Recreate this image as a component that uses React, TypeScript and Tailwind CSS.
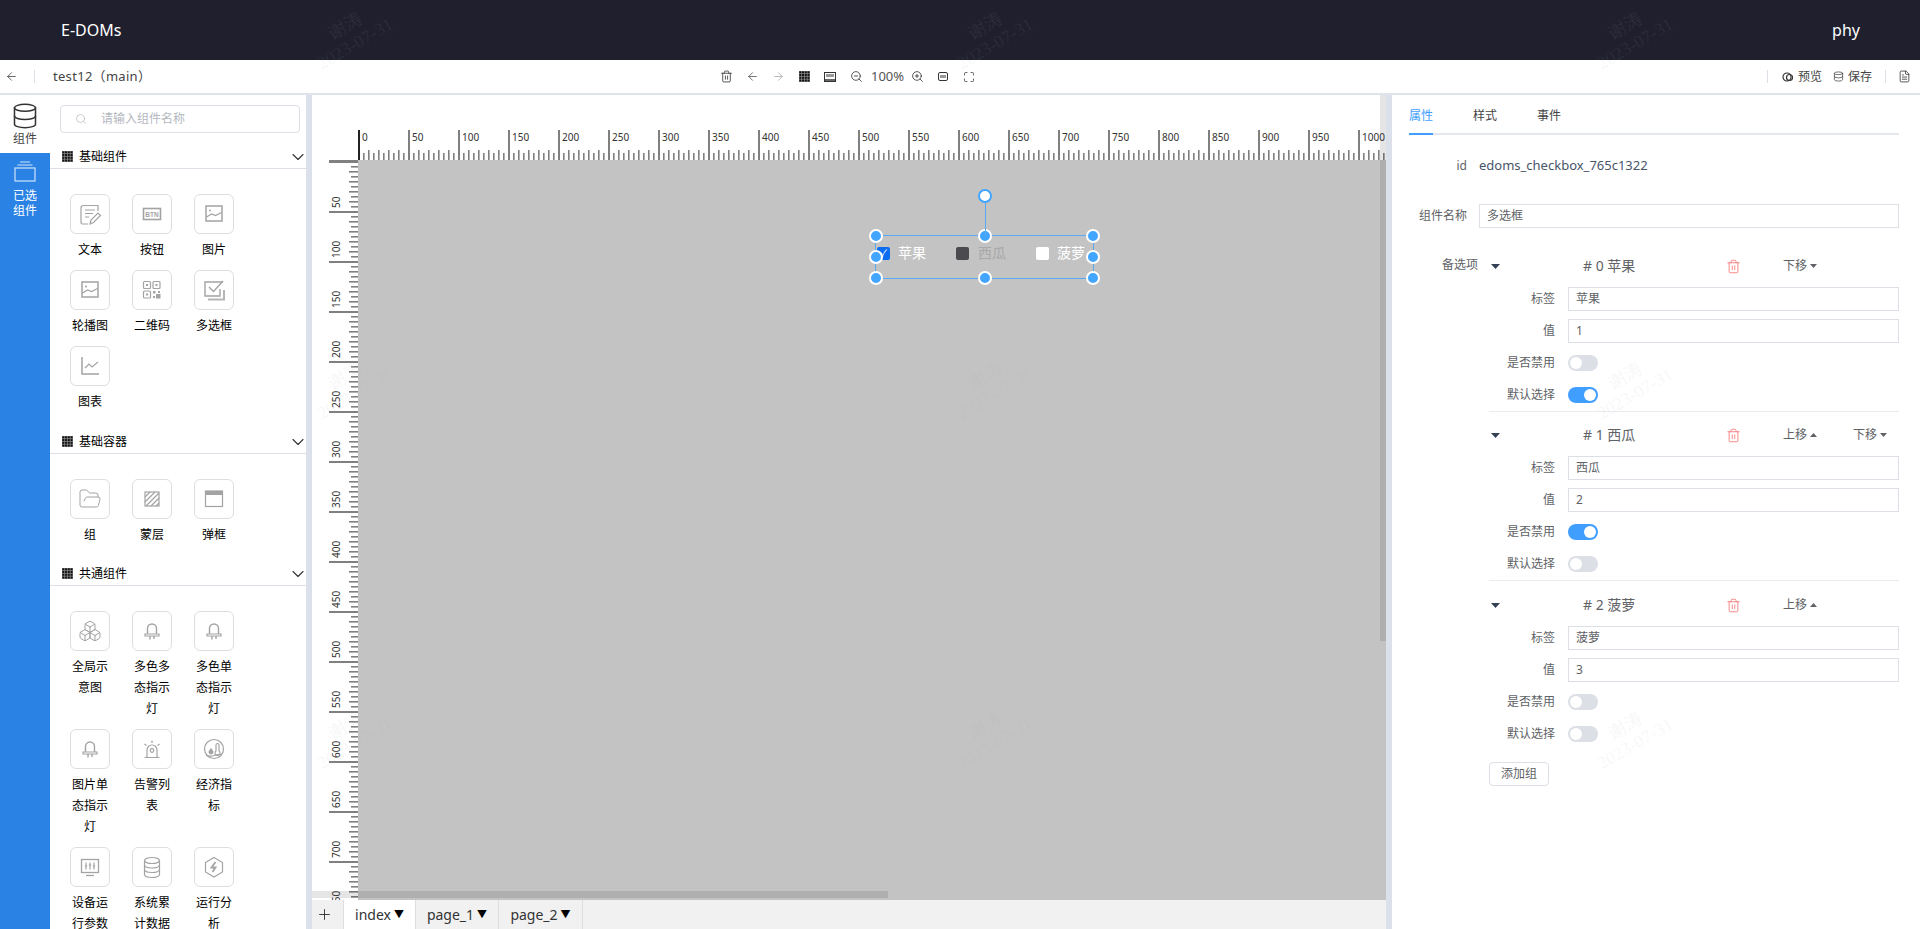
import {
  ArrowLeft,
  ArrowRight,
  Boxes,
  ChevronDown,
  Database,
  FileText,
  FolderOpen,
  Maximize,
  Plus,
  Search,
  Trash2,
  ZoomIn,
  ZoomOut,
} from 'lucide-react';
import type { ReactNode } from 'react';

const FONT = "font-['Noto_Sans','Noto_Sans_CJK_SC',sans-serif]";

function GridIcon() {
  const cells = [0, 1, 2, 3];
  return (
    <svg width="11" height="11" viewBox="0 0 11 11" className="shrink-0">
      <rect width="11" height="11" fill="#8a8a8a" />
      {cells.map((y) =>
        cells.map((x) => (
          <rect key={`${x}-${y}`} x={x * 2.75 + 0.3} y={y * 2.75 + 0.3} width="2" height="2" fill="#111" />
        )),
      )}
    </svg>
  );
}

function Svg({ children }: { children: ReactNode }) {
  return (
    <svg width="24" height="24" viewBox="0 0 24 24" fill="none" stroke="#a3a3a3" strokeWidth="1.2">
      {children}
    </svg>
  );
}

const NoteIcon = () => (
  <Svg>
    <path d="M20 9V3.5H5.5Q3 3.5 3 6v14.5q0 1.5 1.5 1.5H10" />
    <path d="M7 8h10M7 11.5h8M7 15h4" />
    <path d="M12 22l1-4 7-7 2.5 2.5-7 7z" />
  </Svg>
);
const BtnIcon = () => (
  <Svg>
    <rect x="3.5" y="6.5" width="17" height="11" strokeWidth="1.6" />
    <text x="12" y="14.5" textAnchor="middle" fontSize="6.5" fontWeight="700" fill="#a3a3a3" stroke="none" fontFamily="Liberation Sans">
      BTN
    </text>
  </Svg>
);
const PictureIcon = () => (
  <Svg>
    <rect x="4" y="4" width="16" height="15" strokeWidth="1.5" />
    <circle cx="8" cy="8.5" r="1" fill="#a3a3a3" stroke="none" />
    <path d="M4.5 15l5-3 4 1.5 6-3" />
  </Svg>
);
const QrIcon = () => (
  <Svg>
    <rect x="3.5" y="3.5" width="7" height="7" rx="1" />
    <rect x="13" y="3.5" width="7" height="7" rx="1" />
    <rect x="3.5" y="13" width="7" height="7" rx="1" />
    <g fill="#a3a3a3" stroke="none">
      <rect x="6" y="6" width="2" height="2" />
      <rect x="15.5" y="6" width="2" height="2" />
      <rect x="6" y="15.5" width="2" height="2" />
      <rect x="13" y="13" width="2.5" height="2.5" />
      <rect x="18" y="13" width="2" height="2" />
      <rect x="16" y="16" width="4.5" height="4.5" />
      <rect x="13" y="18" width="2" height="2" />
    </g>
  </Svg>
);
const CheckIcon = () => (
  <Svg>
    <path d="M21 4H3v14h15v-7" strokeWidth="1.4" />
    <path d="M7 9l4.5 4.5L21 3" strokeWidth="1.4" />
    <path d="M6 21.5h16V12" strokeWidth="2" stroke="#b5b5b5" />
  </Svg>
);
const ChartIcon = () => (
  <Svg>
    <path d="M4 3v17h17" strokeWidth="1.5" />
    <path d="M7 14l4-4 3 3 6-5" />
  </Svg>
);
const HatchIcon = () => (
  <Svg>
    <rect x="5" y="5" width="14" height="14" strokeWidth="1.2" />
    <path d="M5 10l5-5M5 15L15 5M6 19L19 6M11 19l8-8M16 19l3-3" />
  </Svg>
);
const WindowIcon = () => (
  <Svg>
    <rect x="3.5" y="4" width="17" height="15.5" strokeWidth="1.2" />
    <rect x="3.5" y="4" width="17" height="4" fill="#a3a3a3" stroke="none" />
  </Svg>
);
const LedIcon = () => (
  <Svg>
    <path d="M7.5 15V9.5a4.5 4.5 0 0 1 9 0V15" strokeWidth="1.4" />
    <path d="M5 15h14v2H5z" strokeWidth="1.2" />
    <path d="M10 17v3.5M14 17v3" strokeWidth="1.4" />
  </Svg>
);
const SirenIcon = () => (
  <Svg>
    <path d="M7 20v-7a5 5 0 0 1 10 0v7" />
    <circle cx="12" cy="13.5" r="1.8" />
    <path d="M4.5 20.5h15M12 3.5v2.5M4.5 7l2 1.5M19.5 7l-2 1.5" />
  </Svg>
);
const EconomyIcon = () => (
  <Svg>
    <circle cx="12" cy="12" r="9.5" />
    <path d="M9 11c-1.5 2-2.5 3-2.5 4a2.5 2.5 0 0 0 5 0c0-1-1-2-2.5-4z" fill="#a3a3a3" stroke="none" />
    <path d="M14 14V8a1.5 1.5 0 0 1 3 0v6a2.5 2.5 0 1 1-3 0z" />
    <path d="M4 18q4 2 8 .5t8-.5" />
  </Svg>
);
const MonitorIcon = () => (
  <Svg>
    <rect x="3.5" y="4.5" width="17" height="13" strokeWidth="1.3" />
    <path d="M8 20.5h8" strokeWidth="1.3" />
    <path d="M8 7.5v7M12 7.5v7M16 7.5v7" />
    <path d="M6.8 11h2.4M10.8 10h2.4M14.8 11h2.4" />
  </Svg>
);
const StackIcon = () => (
  <Svg>
    <ellipse cx="12" cy="5.5" rx="7.5" ry="3" />
    <path d="M4.5 5.5v14c0 1.7 3.4 3 7.5 3s7.5-1.3 7.5-3v-14" />
    <path d="M4.5 10c0 1.7 3.4 3 7.5 3s7.5-1.3 7.5-3M4.5 14.5c0 1.7 3.4 3 7.5 3s7.5-1.3 7.5-3" />
  </Svg>
);
const HexIcon = () => (
  <Svg>
    <path d="M12 2.5l8.5 5v9.5L12 22l-8.5-5V7.5z" />
    <path d="M13.5 7L9.5 12.5h4L10.5 17" strokeWidth="1.8" />
  </Svg>
);

type Item = { label: string; icon: ReactNode };

const basicItems: Item[] = [
  { label: '文本', icon: <NoteIcon /> },
  { label: '按钮', icon: <BtnIcon /> },
  { label: '图片', icon: <PictureIcon /> },
  { label: '轮播图', icon: <PictureIcon /> },
  { label: '二维码', icon: <QrIcon /> },
  { label: '多选框', icon: <CheckIcon /> },
  { label: '图表', icon: <ChartIcon /> },
];
const containerItems: Item[] = [
  { label: '组', icon: <FolderOpen size={24} strokeWidth={1} color="#a3a3a3" /> },
  { label: '蒙层', icon: <HatchIcon /> },
  { label: '弹框', icon: <WindowIcon /> },
];
const commonItems: Item[] = [
  { label: '全局示意图', icon: <Boxes size={24} strokeWidth={1} color="#a3a3a3" /> },
  { label: '多色多态指示灯', icon: <LedIcon /> },
  { label: '多色单态指示灯', icon: <LedIcon /> },
  { label: '图片单态指示灯', icon: <LedIcon /> },
  { label: '告警列表', icon: <SirenIcon /> },
  { label: '经济指标', icon: <EconomyIcon /> },
  { label: '设备运行参数', icon: <MonitorIcon /> },
  { label: '系统累计数据', icon: <StackIcon /> },
  { label: '运行分析', icon: <HexIcon /> },
];

function Section({ title, items, bottom }: { title: string; items: Item[]; bottom: string }) {
  return (
    <section>
      <div className="flex h-[23px] items-center border-b border-[#dcdfe6] pb-[1px] pl-3 text-xs text-black">
        <GridIcon />
        <span className="ml-[6px] flex-1">{title}</span>
        <ChevronDown size={20} strokeWidth={1.3} color="#333" className="-mr-[2px]" />
      </div>
      <div className={`grid grid-cols-[40px_40px_40px] gap-x-[22px] pl-5 pt-[25px] ${bottom}`}>
        {items.map((item) => (
          <div key={item.label}>
            <div className="flex h-10 w-10 items-center justify-center rounded-md border border-[#dedede]">
              {item.icon}
            </div>
            <p className="mb-[10px] mt-[5px] text-center text-xs leading-[21px] text-black">{item.label}</p>
          </div>
        ))}
      </div>
    </section>
  );
}

function Toggle({ on }: { on?: boolean }) {
  return (
    <div className={`flex h-4 w-[30px] items-center rounded-full px-[2px] ${on ? 'justify-end bg-[#409eff]' : 'bg-[#dcdfe6]'}`}>
      <div className="h-3 w-3 rounded-full bg-white" />
    </div>
  );
}

function Caret({ up }: { up?: boolean }) {
  return (
    <svg width="7" height="4" viewBox="0 0 7 4" className="ml-[3px]">
      <path d={up ? 'M0 4L3.5 0L7 4z' : 'M0 0L7 0L3.5 4z'} fill="#606266" />
    </svg>
  );
}

function Field({ label, children }: { label: string; children: ReactNode }) {
  return (
    <div className="flex h-6 items-center">
      <span className="w-[66px] text-right text-xs text-[#606266]">{label}</span>
      <div className="ml-[13px] flex-1">{children}</div>
    </div>
  );
}

function TextBox({ value }: { value: string }) {
  return (
    <div className="flex h-6 items-center border border-[#dcdfe6] px-[7px] text-xs text-[#606266]">{value}</div>
  );
}

function OptionGroup({
  index,
  name,
  value,
  up,
  down,
  disabled,
  checked,
  wrapper,
}: {
  index: number;
  name: string;
  value: string;
  up?: boolean;
  down?: boolean;
  disabled?: boolean;
  checked?: boolean;
  wrapper: string;
}) {
  return (
    <div className={wrapper}>
      <div className="mb-[9px] flex h-6 items-center text-xs text-[#606266]">
        <div className="w-[94px] pl-[2px]">
          <svg width="9" height="5" viewBox="0 0 9 5" className="block">
            <path d="M0 0h9L4.5 5z" fill="#334155" />
          </svg>
        </div>
        <span className="w-[143px] text-sm">
          # {index} {name}
        </span>
        <div className="w-[57px]">
          <Trash2 size={15} strokeWidth={1.3} color="#f56c6c" />
        </div>
        <div className="flex w-[70px] items-center">
          {up ? (
            <>
              上移
              <Caret up />
            </>
          ) : (
            <>
              下移
              <Caret />
            </>
          )}
        </div>
        {up && down && (
          <div className="flex items-center">
            下移
            <Caret />
          </div>
        )}
      </div>
      <div className="flex flex-col gap-2">
        <Field label="标签">
          <TextBox value={name} />
        </Field>
        <Field label="值">
          <TextBox value={value} />
        </Field>
        <Field label="是否禁用">
          <Toggle on={disabled} />
        </Field>
        <Field label="默认选择">
          <Toggle on={checked} />
        </Field>
      </div>
    </div>
  );
}

const ticks = Array.from({ length: 260 }, (_, i) => i * 5);

function TopRuler() {
  return (
    <svg height="30" className="block w-full">
      {ticks.map((t) => {
        const big = t % 50 === 0;
        const h = big ? 30 : t % 10 === 0 ? 10 : 7;
        return <rect key={t} x={t} y={30 - h} width={big ? 2 : 1.6} height={h} fill={t === 0 ? '#222' : '#808080'} />;
      })}
      {ticks
        .filter((t) => t % 50 === 0)
        .map((t) => (
          <text key={t} x={t + 4} y="11" fontSize="10" fill="#333" fontFamily="Noto Sans">
            {t}
          </text>
        ))}
    </svg>
  );
}

function LeftRuler() {
  return (
    <svg width="29" className="block h-full shrink-0">
      {ticks.map((t) => {
        const big = t % 50 === 0;
        const w = big ? 29 : t % 10 === 0 ? 9 : 7;
        return <rect key={t} x={29 - w} y={t} width={w} height={big ? 2 : 1.6} fill="#808080" />;
      })}
      {ticks
        .filter((t) => t % 50 === 0 && t > 0)
        .map((t) => (
          <text key={t} transform={`translate(11 ${t - 3}) rotate(-90)`} fontSize="10" fill="#333" fontFamily="Noto Sans">
            {t}
          </text>
        ))}
    </svg>
  );
}

function Handle({ className }: { className: string }) {
  return (
    <div className={`absolute h-[14px] w-[14px] -translate-x-1/2 -translate-y-1/2 rounded-full border-2 border-white bg-[#42a5ff] ${className}`} />
  );
}

function CheckboxWidget() {
  return (
    <div className="absolute left-[517px] top-[75px] h-[44px] w-[219px] border border-[#5aa9f5]">
      <div className="flex h-[34px] items-center pl-[1px] text-sm text-white">
        <div className="flex h-[13px] w-[13px] items-center justify-center rounded-[2px] bg-[#0a6cf0] text-[10px] leading-none">✓</div>
        <span className="ml-2 w-[58px]">苹果</span>
        <div className="h-[13px] w-[13px] rounded-[2px] bg-[#4a4a4f]" />
        <span className="ml-[9px] w-[58px] text-[#a8a8a8]">西瓜</span>
        <div className="h-[13px] w-[13px] rounded-[2px] bg-white" />
        <span className="ml-[8px]">菠萝</span>
      </div>
      <Handle className="left-0 top-0" />
      <Handle className="left-1/2 top-0" />
      <Handle className="left-full top-0" />
      <Handle className="left-0 top-1/2" />
      <Handle className="left-full top-1/2" />
      <Handle className="left-0 top-full" />
      <Handle className="left-1/2 top-full" />
      <Handle className="left-full top-full" />
      <div className="absolute bottom-full left-1/2 h-10 w-px bg-[#5aa9f5]" />
      <div className="absolute left-1/2 top-[-40px] h-[14px] w-[14px] -translate-x-1/2 -translate-y-1/2 rounded-full border-2 border-[#42a5ff] bg-white" />
    </div>
  );
}

const watermarks = [
  'left-[350px] top-[35px]',
  'left-[990px] top-[35px]',
  'left-[1630px] top-[35px]',
  'left-[350px] top-[385px]',
  'left-[990px] top-[385px]',
  'left-[1630px] top-[385px]',
  'left-[350px] top-[735px]',
  'left-[990px] top-[735px]',
  'left-[1630px] top-[735px]',
];

function ToolButton({ children }: { children: ReactNode }) {
  return <div className="flex w-[26px] items-center justify-center">{children}</div>;
}

export default function App() {
  const tool = { size: 13, strokeWidth: 1.5, color: '#333' };
  return (
    <div className={`relative flex h-screen w-full flex-col overflow-hidden bg-white ${FONT}`}>
      {/* Top bar */}
      <header className="flex h-[60px] shrink-0 items-center justify-between bg-[#1f1f2e] pl-[61px] pr-[60px] text-white">
        <span className="text-base">E-DOMs</span>
        <span className="text-base">phy</span>
      </header>

      {/* Toolbar */}
      <div className="flex h-[35px] shrink-0 items-center border-b-2 border-[#dfe3ec] text-[#333]">
        <div className="flex w-[713px] items-center">
          <ArrowLeft size={13} strokeWidth={1.5} className="ml-[5px]" color="#444" />
          <div className="ml-[16px] h-[13px] w-px bg-[#dcdfe6]" />
          <span className="ml-[18px] text-[13px] tracking-[0.3px] text-[#444]">test12（main）</span>
        </div>
        <ToolButton>
          <Trash2 {...tool} />
        </ToolButton>
        <ToolButton>
          <ArrowLeft {...tool} color="#555" />
        </ToolButton>
        <ToolButton>
          <ArrowRight {...tool} color="#aaa" />
        </ToolButton>
        <ToolButton>
          <GridIcon />
        </ToolButton>
        <ToolButton>
          <svg width="12" height="10" viewBox="0 0 12 10" fill="none" stroke="#333">
            <rect x="0.5" y="0.5" width="11" height="9" />
            <path d="M3 2v3M5 2v3M7 2v3M9 2v3" />
            <path d="M0 8h12" strokeWidth="1.5" />
          </svg>
        </ToolButton>
        <ToolButton>
          <ZoomOut {...tool} />
        </ToolButton>
        <span className="ml-[2px] w-[33px] text-[13px] text-[#555]">100%</span>
        <ToolButton>
          <ZoomIn {...tool} />
        </ToolButton>
        <ToolButton>
          <svg width="10" height="9" viewBox="0 0 10 9" fill="none" stroke="#333">
            <rect x="0.5" y="0.5" width="9" height="8" rx="1.5" />
            <path d="M3 3v3M5 3v3M7 3v3" />
          </svg>
        </ToolButton>
        <ToolButton>
          <Maximize {...tool} strokeWidth={1.5} size={12} />
        </ToolButton>

        <div className="ml-auto flex items-center text-xs text-[#444]">
          <div className="h-[13px] w-px bg-[#dcdfe6]" />
          <svg width="12" height="12" viewBox="0 0 12 12" fill="none" stroke="#333" strokeWidth="1.2" className="ml-[14px]">
            <circle cx="5" cy="6" r="4" />
            <circle cx="7.5" cy="6.5" r="3" />
          </svg>
          <span className="ml-[4px]">预览</span>
          <Database size={11} strokeWidth={1.5} color="#333" className="ml-[11px]" />
          <span className="ml-[4px]">保存</span>
          <div className="ml-[13px] h-[13px] w-px bg-[#dcdfe6]" />
          <FileText size={13} strokeWidth={1.5} color="#333" className="ml-[12px] mr-[9px]" />
        </div>
      </div>

      <div className="flex min-h-0 flex-1">
        {/* Rail */}
        <nav className="flex w-[50px] shrink-0 flex-col text-xs">
          <div className="flex h-[58px] flex-col items-center pt-[7px] text-[#444]">
            <Database size={28} strokeWidth={1.3} color="#333" />
            <span className="mt-[1px] leading-4">组件</span>
          </div>
          <div className="flex flex-1 flex-col items-center bg-[#2a82e4] pt-[8px] text-white">
            <svg width="24" height="22" viewBox="0 0 24 22" fill="none" stroke="#cfe3fa" strokeWidth="1.2">
              <rect x="2" y="7" width="20" height="13" />
              <path d="M4.5 4h15M7 1h10" />
            </svg>
            <span className="mt-[5px] w-6 text-center leading-[15px]">已选组件</span>
          </div>
        </nav>

        {/* Component palette */}
        <aside className="w-[256px] shrink-0 overflow-hidden pt-[10px]">
          <div className="ml-[10px] mr-[6px] flex h-7 items-center rounded border border-[#dcdfe6] pl-[14px] text-xs text-[#b4b8c0]">
            <Search size={12} strokeWidth={1.4} color="#b4b8c0" />
            <span className="ml-[14px]">请输入组件名称</span>
          </div>
          <div className="mt-[13px]">
            <Section title="基础组件" items={basicItems} bottom="pb-[9px]" />
            <Section title="基础容器" items={containerItems} bottom="pb-[8px]" />
            <Section title="共通组件" items={commonItems} bottom="" />
          </div>
        </aside>
        <div className="w-[6px] shrink-0 bg-[#dce0ea]" />

        {/* Canvas area */}
        <main className="flex w-[1074px] shrink-0 flex-col">
          <div className="relative flex min-h-0 flex-1 flex-col overflow-hidden">
            <div className="h-[35px] shrink-0" />
            <div className="flex h-[30px] shrink-0">
              <div className="w-[46px] shrink-0" />
              <div className="min-w-0 flex-1 overflow-hidden">
                <TopRuler />
              </div>
            </div>
            <div className="flex min-h-0 flex-1">
              <div className="w-[17px] shrink-0" />
              <div className="flex w-[29px] shrink-0 flex-col border-t border-[#808080]">
                <LeftRuler />
              </div>
              <div className="relative flex-1 bg-[#c3c3c3]">
                <CheckboxWidget />
              </div>
            </div>
            {/* scrollbars */}
            <div className="absolute right-0 top-0 h-[546px] w-[6px] bg-black/10" />
            <div className="absolute bottom-[2px] left-0 h-[7px] w-[576px] bg-black/10" />
          </div>
          <div className="flex h-[29px] shrink-0 bg-[#f1f1f1] text-sm text-[#333]">
            <div className="flex w-[31px] items-center pl-[4px]">
              <Plus size={17} strokeWidth={1.2} color="#222" />
            </div>
            <div className="flex w-[73px] items-center justify-center border-x border-[#dedede] bg-white">
              index<span className="ml-[3px] text-[10px] text-black">▼</span>
            </div>
            <div className="flex w-[83px] items-center justify-center border-r border-[#dedede]">
              page_1<span className="ml-[3px] text-[10px] text-black">▼</span>
            </div>
            <div className="flex w-[84px] items-center justify-center border-r border-[#dedede]">
              page_2<span className="ml-[3px] text-[10px] text-black">▼</span>
            </div>
          </div>
        </main>
        <div className="w-[6px] shrink-0 bg-[#dce0ea]" />

        {/* Properties */}
        <aside className="min-w-0 flex-1 pl-[17px] pr-[21px]">
          <div className="flex h-10 items-end gap-10 border-b-2 border-[#e4e7ed] text-xs text-[#444]">
            <span className="-mb-[2px] border-b-2 border-[#409eff] pb-[9px] text-[#409eff]">属性</span>
            <span className="pb-[9px]">样式</span>
            <span className="pb-[9px]">事件</span>
          </div>
          <div className="mt-[19px] flex h-6 items-center text-xs text-[#606266]">
            <span className="w-[58px] text-right">id</span>
            <span className="ml-3 text-[13px] text-[#475569]">edoms_checkbox_765c1322</span>
          </div>
          <div className="mt-[26px] flex h-6 items-center text-xs text-[#606266]">
            <span className="w-[58px] text-right">组件名称</span>
            <div className="ml-3 flex-1">
              <TextBox value="多选框" />
            </div>
          </div>
          <div className="mt-[26px] flex items-start">
            <span className="w-[69px] pt-[3px] text-right text-xs text-[#606266]">备选项</span>
            <div className="ml-[11px] flex-1">
              <OptionGroup index={0} name="苹果" value="1" down checked wrapper="mb-[11px] border-b border-[#e9ebf0] pb-1" />
              <OptionGroup index={1} name="西瓜" value="2" up down disabled wrapper="mb-[12px] border-b border-[#e9ebf0] pb-1" />
              <OptionGroup index={2} name="菠萝" value="3" up wrapper="" />
              <button className="mt-4 h-6 w-[60px] rounded-sm border border-[#dcdfe6] text-xs text-[#606266]">添加组</button>
            </div>
          </div>
        </aside>
      </div>

      {/* Watermark */}
      {watermarks.map((pos) => (
        <div
          key={pos}
          className={`pointer-events-none absolute -translate-x-1/2 -translate-y-1/2 -rotate-[30deg] whitespace-nowrap text-center font-['Liberation_Serif','Noto_Sans_CJK_SC',serif] text-lg leading-5 text-[#aaaaaa]/[0.1] ${pos}`}
        >
          谢涛
          <br />
          2023-07-31
        </div>
      ))}
    </div>
  );
}
